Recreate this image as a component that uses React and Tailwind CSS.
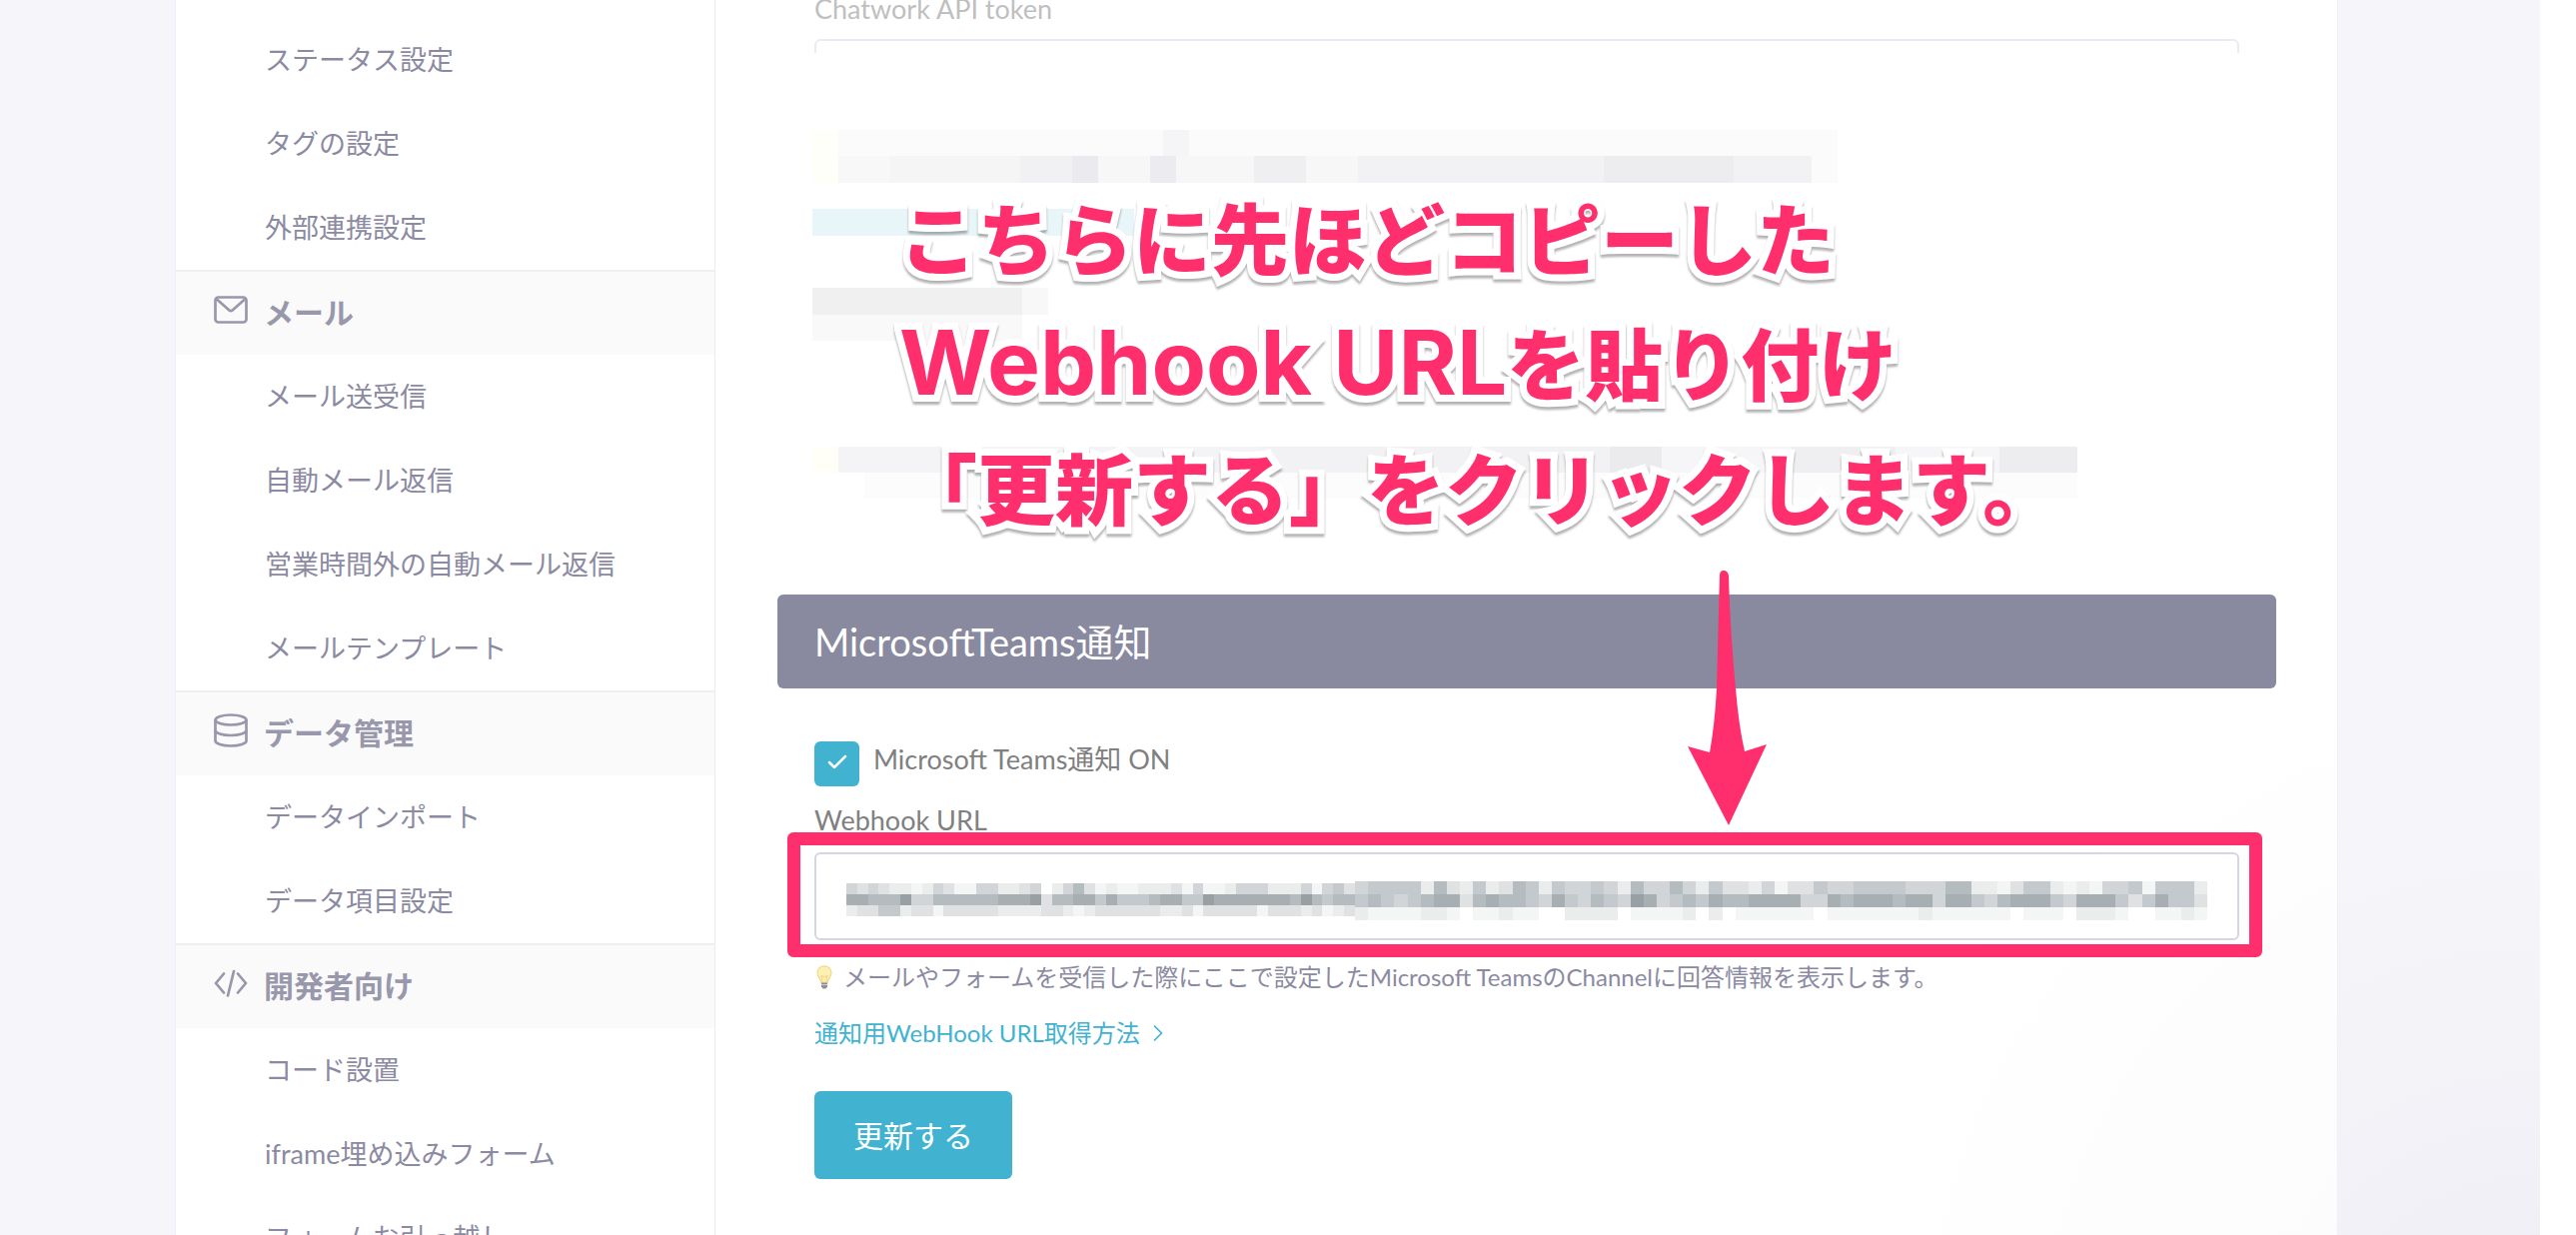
import { ChevronRight, Check } from 'lucide-react'

const SHADES = [
  'bg-transparent',
  'bg-[#f4f5f5]',
  'bg-[#ebeded]',
  'bg-[#dfe1e2]',
  'bg-[#d1d5d7]',
  'bg-[#c3c9cc]',
  'bg-[#b5bcc0]',
  'bg-[#a7afb3]',
  'bg-[#98a0a4]',
]

// One digit per mosaic cell, 0 is clear and 8 the darkest
const URL_MASK_LEFT = [
  '43432212431144223402463121122231411244422241453',
  '77666844666666777836677575556775587777777686566',
  '23355233133333222233212333333223133333133323123',
]
const URL_MASK_RIGHT = [
  '45555263252365254454264464253324133544555544466221355212144515552',
  '56545677367665475465487456576677774476777677477546777547775357553',
  '21111221011211002222011112020111111011111112111111011102221001121',
]

function MailIcon() {
  return (
    <svg viewBox="0 0 34 30" className="h-[30px] w-[34px]" fill="none" stroke="currentColor" strokeWidth="2.7" strokeLinejoin="round">
      <rect x="1.5" y="2.5" width="31" height="25" rx="3" />
      <path d="M3 4.5l12.4 11q1.6 1.4 3.2 0l12.4-11" />
    </svg>
  )
}

function DatabaseIcon() {
  return (
    <svg viewBox="0 0 34 34" className="h-[34px] w-[34px]" fill="none" stroke="currentColor" strokeWidth="2.7">
      <ellipse cx="17" cy="6.5" rx="15.5" ry="5" />
      <path d="M1.5 6.5v21c0 2.8 7 5 15.5 5s15.5-2.2 15.5-5v-21" />
      <path d="M1.5 17c0 2.8 7 5 15.5 5s15.5-2.2 15.5-5" />
    </svg>
  )
}

function CodeIcon() {
  return (
    <svg viewBox="0 0 34 28" className="h-[28px] w-[34px]" fill="none" stroke="currentColor" strokeWidth="2.7" strokeLinecap="round" strokeLinejoin="round">
      <path d="M10 4.5l-8 9.5 8 9.5M24 4.5l8 9.5-8 9.5M20 2l-6 24.5" />
    </svg>
  )
}

function BulbIcon() {
  return (
    <svg viewBox="0 0 20 28" className="h-[26px] w-[20px] shrink-0" fill="none">
      <path d="M10 2c-4.5 0-7.5 3.2-7.5 7.3 0 4 3.2 5.7 3.9 10.2h7.2c.7-4.5 3.9-6.2 3.9-10.2C17.500 5.200 14.500 2 10 2z" fill="#fdf0b4" stroke="#f3d98a" strokeWidth="1.3" />
      <path d="M8 19l-1.2-7 3.2 2 3.200-2L12 19" stroke="#f5cf7d" />
      <path d="M6.7 20h6.6v4l-1.8 2.500h-3L6.700 24z" fill="#8b8f93" />
      <path d="M6.7 22.2h6.6" stroke="#d8dadb" />
    </svg>
  )
}

const MENU = [
  { items: ['ステータス設定', 'タグの設定', '外部連携設定'] },
  {
    title: 'メール',
    icon: MailIcon,
    items: ['メール送受信', '自動メール返信', '営業時間外の自動メール返信', 'メールテンプレート'],
  },
  { title: 'データ管理', icon: DatabaseIcon, items: ['データインポート', 'データ項目設定'] },
  {
    title: '開発者向け',
    icon: CodeIcon,
    items: ['コード設置', 'iframe埋め込みフォーム', 'フォームお引っ越し'],
  },
]

function Sidebar() {
  return (
    <nav className="w-[541px] shrink-0 border-x border-l-[#eeedfb] border-r-[#ebebef] pt-[18px] text-[#8b8aa2]">
      {MENU.map((group, i) => (
        <section key={i}>
          {group.title && (
            <h2 className="flex h-[85px] items-center gap-[16px] border-t-2 border-[#efeff0] bg-[#fafafa] pb-[3px] pl-[38px] text-[30px] font-bold text-[#9897ac]">
              <span className="pb-1"><group.icon /></span>
              {group.title}
            </h2>
          )}
          <ul>
            {group.items.map((item) => (
              <li key={item}>
                <a href="#" className="flex h-[84px] items-center pl-[89px] text-[27px]">{item}</a>
              </li>
            ))}
          </ul>
        </section>
      ))}
    </nav>
  )
}

function MaskRow({ cells, className = '' }) {
  return (
    <div className={`flex ${className}`}>
      {cells.split('').map((c, i) => (
        <span key={i} className={`flex-1 ${SHADES[c]}`} />
      ))}
    </div>
  )
}

function Annotation() {
  return (
    <p className="absolute top-[121px] left-[87px] font-['Noto_Sans_CJK_JP',sans-serif] text-[78px] leading-[125px] font-black whitespace-nowrap text-[#ff2f6d] drop-shadow-[0_3px_1px_rgba(0,0,0,0.3)] [-webkit-text-stroke:14px_white] [paint-order:stroke_fill]">
      <span className="block h-[125px]">こちらに先ほどコピーした</span>
      <span className="block h-[125px]">
        <span className="font-['Inter',sans-serif] text-[89px] leading-none font-bold">Webhook URL</span>
        を貼り付け
      </span>
      <span className="block h-[125px]">「更新する」をクリックします。</span>
    </p>
  )
}

function RedactedBlock() {
  return (
    <div className="relative z-10 mr-[-64px] ml-[-2px] h-[459px] bg-white">
      <div className="pt-[77px]">
        <div className="flex h-[26px] w-[1026px]">
          <span className="w-[26px] bg-[#fffffa]" />
          <span className="flex-1 bg-[#fbfbfc]" />
          <span className="w-[26px] bg-[#f5f5f8]" />
          <span className="flex-[2] bg-[#fbfbfc]" />
        </div>
        <div className="flex h-[27px] w-[1026px]">
          <span className="w-[26px] bg-[#fffffa]" />
          <span className="w-[52px] bg-[#f8f8f9]" />
          <span className="w-[130px] bg-[#f5f5f6]" />
          <span className="w-[52px] bg-[#f1f1f3]" />
          <span className="w-[26px] bg-[#ebebef]" />
          <span className="w-[52px] bg-[#f7f7f8]" />
          <span className="w-[26px] bg-[#ebebf0]" />
          <span className="w-[78px] bg-[#f7f7f8]" />
          <span className="w-[52px] bg-[#efeff2]" />
          <span className="w-[52px] bg-[#f7f7f8]" />
          <span className="flex-1 bg-[#f2f2f4]" />
          <span className="w-[130px] bg-[#ededf0]" />
          <span className="w-[78px] bg-[#f2f2f4]" />
          <span className="w-[26px] bg-[#fbfbfb]" />
        </div>
      </div>
      <div className="mt-[26px] h-[27px] w-[322px] bg-[#e8f5f9]" />
      <div className="mt-[52px] flex h-[27px] w-[236px]">
        <span className="flex-1 bg-[#f0f0f0]" />
        <span className="w-[26px] bg-[#f8f8f8]" />
      </div>
      <div className="h-[26px] w-[210px] bg-[#f9f9f9]" />
      <div className="mt-[106px] flex h-[26px] w-[1266px]">
        <span className="w-[26px] bg-[#fffff7]" />
        <span className="w-[420px] bg-[#f4f4f6]" />
        <span className="flex-1 bg-[#f2f2f4]" />
        <span className="w-[52px] bg-[#ebebee]" />
        <span className="w-[130px] bg-[#f6f6f8]" />
        <span className="w-[104px] bg-[#efeff2]" />
        <span className="w-[104px] bg-[#f6f6f8]" />
        <span className="w-[78px] bg-[#ededf0]" />
      </div>
      <div className="ml-[52px] h-[26px] w-[1214px] bg-[#fcfcfd]" />
      <Annotation />
    </div>
  )
}

function Arrow() {
  return (
    <svg viewBox="0 0 80 256" className="absolute top-[-24px] left-[911px] z-10 h-[256px] w-[80px]" fill="#ff2f6d">
      <path d="M32 5Q32 0 36 0T41 5C42 45 45 85 48 118Q51 155 57 181L79 174L41 255L0 176L22 182Q27 155 29 118C30 80 31 40 32 5Z" />
    </svg>
  )
}

function WebhookField() {
  return (
    <div className="relative mt-4">
      <input id="webhook" type="text" className="block h-[88px] w-full rounded-md border-2 border-[#d6d5e4] bg-white px-8" />
      <div className="pointer-events-none absolute inset-x-[32px] top-[29px] flex">
        <div className="mt-[2px] w-[509px]">
          {URL_MASK_LEFT.map((row, i) => <MaskRow key={i} cells={row} className="h-[11px]" />)}
        </div>
        <div className="flex-1">
          {URL_MASK_RIGHT.map((row, i) => <MaskRow key={i} cells={row} className="h-[13px]" />)}
        </div>
      </div>
      {/* Highlight around the field */}
      <div className="pointer-events-none absolute -top-5 right-[-23px] bottom-[-17px] left-[-27px] rounded-md border-[13px] border-[#ff2f6d]" />
    </div>
  )
}

export default function App() {
  return (
    <div className="relative h-screen overflow-hidden bg-white pr-9 font-['Lato','Noto_Sans_CJK_JP',sans-serif]">
      <div className="h-full bg-[#f6f6fa] bg-[radial-gradient(circle_at_100%_115%,#eeedf4_0,#f6f6fa_620px)] pr-[202px] pl-[175px]">
        <div className="flex h-full bg-white">
          <Sidebar />
          <main className="min-w-0 flex-1 border-r border-[#eeedfb] bg-[radial-gradient(circle_at_115%_110%,#fafafa_0,#ffffff_750px)] pr-[61px] pl-[62px]">
            <div className="px-[37px]">
              <label htmlFor="chatwork" className="-mt-[7px] block h-8 text-[27px] leading-8 text-[#bfbfbf]">Chatwork API token</label>
              <input id="chatwork" type="text" className="mt-[14px] block h-[14px] w-full rounded-t-md border-2 border-b-0 border-[#ebeaf2]" />
              <RedactedBlock />
            </div>

            <section className="relative mt-[83px]">
              <h1 className="flex h-[94px] items-center rounded-md bg-[#89899f] px-[37px] text-[38px] text-white">MicrosoftTeams通知</h1>
              <Arrow />
              <form className="px-[37px] pt-[53px]" onSubmit={(e) => e.preventDefault()}>
                <label className="flex items-start gap-[14px] text-[27px] leading-9 text-[#808080]">
                  <span className="relative flex size-[45px] items-center justify-center">
                    <input type="checkbox" defaultChecked className="absolute inset-0 size-full appearance-none rounded-md bg-[#41b3d0]" />
                    <Check className="relative mb-1 size-6 text-white" strokeWidth={2.5} />
                  </span>
                  Microsoft Teams通知 ON
                </label>
                <label htmlFor="webhook" className="mt-[18px] block h-8 text-[27px] leading-8 text-[#808080]">Webhook URL</label>
                <WebhookField />
                <p className="mt-[19px] flex h-9 items-center gap-[9px] text-[24px] text-[#8b8aa2]">
                  <BulbIcon />
                  メールやフォームを受信した際にここで設定したMicrosoft TeamsのChannelに回答情報を表示します。
                </p>
                <a href="#" className="mt-5 flex h-9 items-center gap-1 text-[24px] text-[#41b3d0]">
                  通知用WebHook URL取得方法
                  <ChevronRight className="size-[28px]" strokeWidth={1.5} />
                </a>
                <button type="submit" className="mt-10 h-[88px] rounded-md bg-[#41b3d0] px-[39px] text-[30px] text-white">更新する</button>
              </form>
            </section>
          </main>
        </div>
      </div>
    </div>
  )
}
